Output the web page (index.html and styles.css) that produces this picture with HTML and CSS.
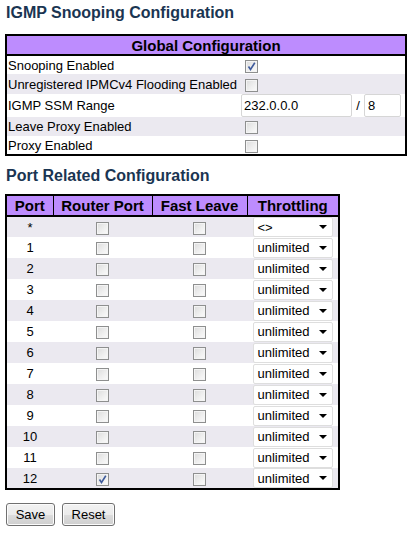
FILE: index.html
```html
<!DOCTYPE html>
<html>
<head>
<meta charset="utf-8">
<link rel="stylesheet" href="styles.css">
</head>
<body>
<h1>IGMP Snooping Configuration</h1>
<table class="cfg global">
  <colgroup><col class="c-label"><col></colgroup>
  <tr><th colspan="2">Global Configuration</th></tr>
  <tr class="odd"><td>Snooping Enabled</td><td class="val"><span class="cb on"><svg viewBox="0 0 11 11" width="11" height="11"><path d="M2.5 5.5 L4.5 8.5 L8.8 1.8" fill="none" stroke="#3f5b9c" stroke-width="1.6"/></svg></span></td></tr>
  <tr class="even tall"><td>Unregistered IPMCv4 Flooding Enabled</td><td class="val"><span class="cb"></span></td></tr>
  <tr class="odd ssm"><td>IGMP SSM Range</td><td class="val"><span class="inp ip">232.0.0.0</span><span class="slash">/</span><span class="inp len">8</span></td></tr>
  <tr class="even"><td>Leave Proxy Enabled</td><td class="val"><span class="cb"></span></td></tr>
  <tr class="odd"><td>Proxy Enabled</td><td class="val"><span class="cb"></span></td></tr>
</table>
<h2>Port Related Configuration</h2>
<table class="cfg ports">
  <colgroup><col class="c-port"><col class="c-router"><col class="c-fast"><col class="c-thr"></colgroup>
  <tr><th>Port</th><th>Router Port</th><th>Fast Leave</th><th>Throttling</th></tr>
  <tr class="even"><td>*</td><td><span class="cb"></span></td><td><span class="cb"></span></td><td><span class="sel"><span class="sel-txt">&lt;&gt;</span><span class="arrow"></span></span></td></tr>
  <tr class="odd"><td>1</td><td><span class="cb"></span></td><td><span class="cb"></span></td><td><span class="sel"><span class="sel-txt">unlimited</span><span class="arrow"></span></span></td></tr>
  <tr class="even"><td>2</td><td><span class="cb"></span></td><td><span class="cb"></span></td><td><span class="sel"><span class="sel-txt">unlimited</span><span class="arrow"></span></span></td></tr>
  <tr class="odd"><td>3</td><td><span class="cb"></span></td><td><span class="cb"></span></td><td><span class="sel"><span class="sel-txt">unlimited</span><span class="arrow"></span></span></td></tr>
  <tr class="even"><td>4</td><td><span class="cb"></span></td><td><span class="cb"></span></td><td><span class="sel"><span class="sel-txt">unlimited</span><span class="arrow"></span></span></td></tr>
  <tr class="odd"><td>5</td><td><span class="cb"></span></td><td><span class="cb"></span></td><td><span class="sel"><span class="sel-txt">unlimited</span><span class="arrow"></span></span></td></tr>
  <tr class="even"><td>6</td><td><span class="cb"></span></td><td><span class="cb"></span></td><td><span class="sel"><span class="sel-txt">unlimited</span><span class="arrow"></span></span></td></tr>
  <tr class="odd"><td>7</td><td><span class="cb"></span></td><td><span class="cb"></span></td><td><span class="sel"><span class="sel-txt">unlimited</span><span class="arrow"></span></span></td></tr>
  <tr class="even"><td>8</td><td><span class="cb"></span></td><td><span class="cb"></span></td><td><span class="sel"><span class="sel-txt">unlimited</span><span class="arrow"></span></span></td></tr>
  <tr class="odd"><td>9</td><td><span class="cb"></span></td><td><span class="cb"></span></td><td><span class="sel"><span class="sel-txt">unlimited</span><span class="arrow"></span></span></td></tr>
  <tr class="even"><td>10</td><td><span class="cb"></span></td><td><span class="cb"></span></td><td><span class="sel"><span class="sel-txt">unlimited</span><span class="arrow"></span></span></td></tr>
  <tr class="odd"><td>11</td><td><span class="cb"></span></td><td><span class="cb"></span></td><td><span class="sel"><span class="sel-txt">unlimited</span><span class="arrow"></span></span></td></tr>
  <tr class="even"><td>12</td><td><span class="cb on"><svg viewBox="0 0 11 11" width="11" height="11"><path d="M2.5 5.5 L4.5 8.5 L8.8 1.8" fill="none" stroke="#3f5b9c" stroke-width="1.6"/></svg></span></td><td><span class="cb"></span></td><td><span class="sel"><span class="sel-txt">unlimited</span><span class="arrow"></span></span></td></tr>
</table>
<div class="buttons">
  <button class="btn save">Save</button>
  <button class="btn reset">Reset</button>
</div>
</body>
</html>
```
FILE: styles.css
```css
* { box-sizing: border-box; }
body {
  margin: 0;
  padding: 3px 5px;
  font-family: "Liberation Sans", Arial, sans-serif;
  font-size: 13px;
  color: #000;
  background: #fff;
}
h1, h2 {
  font-size: 16px;
  line-height: 19px;
  font-weight: bold;
  color: #1a3552;
  margin: 0;
  padding-left: 1px;
}
h1 { margin-bottom: 12px; }
h2 { margin: 10px 0 9px 0; }

.cfg {
  border-collapse: collapse;
  border: 2px solid #000;
  table-layout: fixed;
}
.cfg th {
  background: #bd8cfe;
  font-size: 15px;
  font-weight: bold;
  height: 20px;
  line-height: 17px;
  padding: 0;
  border-bottom: 2px solid #000;
  text-align: center;
}
.cfg td {
  padding: 0;
  line-height: 15px;
}
.cfg tr.even td { background: #ebe9f0; }
.cfg tr.odd td { background: #fff; }

.global { width: 402px; }
.global .c-label { width: 235px; }
.global td { height: 19px; padding-left: 1px; }
.global tr.tall td { height: 20px; }
.global td.val { padding-left: 0; }
.global tr.ssm td { height: 23px; }
.global .cb { margin: 0 0 0 4px; vertical-align: middle; }

.cb {
  display: inline-block;
  width: 13px;
  height: 13px;
  border: 1px solid #8e8f8f;
  background: linear-gradient(135deg, #dcdcdc 0%, #f0f0f0 60%, #fbfbfb 100%);
  box-shadow: inset 0 0 0 1px #f4f4f4;
  vertical-align: middle;
  position: relative;
}
.cb svg { display: block; }

.inp {
  display: inline-block;
  vertical-align: middle;
  height: 23px;
  line-height: 21px;
  border: 1px solid #d6d6d6;
  border-radius: 2px;
  padding-left: 2px;
  background: #fff;
}
.inp.ip { width: 111px; }
.inp.len { width: 37px; padding-left: 3px; }
.slash {
  display: inline-block;
  width: 12px;
  text-align: center;
  vertical-align: middle;
}

.ports { width: 335px; }
.ports .c-port { width: 47px; }
.ports .c-router { width: 99px; }
.ports .c-fast { width: 95px; }
.ports th { height: 21px; }
.ports th + th { border-left: 1px solid #000; }
.ports td { height: 21px; text-align: center; }

.sel {
  display: inline-flex;
  align-items: center;
  justify-content: space-between;
  width: 80px;
  height: 20px;
  border: 1px solid #dedede;
  border-radius: 2px;
  background: #fff;
  padding: 0 5px 0 4px;
  vertical-align: middle;
  text-align: left;
}
.arrow {
  width: 0;
  height: 0;
  border-left: 4px solid transparent;
  border-right: 4px solid transparent;
  border-top: 4px solid #000;
}

.buttons {
  margin-top: 13px;
  display: flex;
  gap: 7px;
  padding-left: 1px;
}
.btn {
  height: 23px;
  font-family: "Liberation Sans", Arial, sans-serif;
  font-size: 13px;
  color: #000;
  border: 1px solid #707070;
  border-radius: 3px;
  background: linear-gradient(#f2f2f2 0%, #ebebeb 50%, #dddddd 51%, #cfcfcf 100%);
  padding: 0;
  box-shadow: inset 0 0 0 1px #fcfcfc;
}
.btn.save { width: 49px; }
.btn.reset { width: 53px; }
```
